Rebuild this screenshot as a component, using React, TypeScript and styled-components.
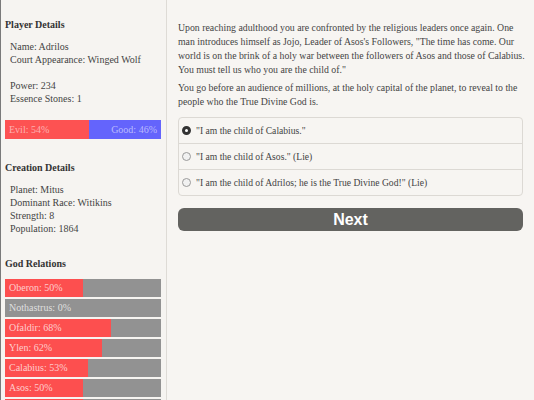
import { createGlobalStyle } from 'styled-components';
import styled from 'styled-components';

const GlobalStyle = createGlobalStyle`
  html, body {
    margin: 0;
    padding: 0;
    background: #f7f5f2;
  }
  body {
    font-family: 'Liberation Serif', 'Times New Roman', serif;
    color: #444;
    overflow: hidden;
  }
`;

interface Relation {
  name: string;
  value: number;
}

const relations: Relation[] = [
  { name: 'Oberon', value: 50 },
  { name: 'Nothastrus', value: 0 },
  { name: 'Ofaldir', value: 68 },
  { name: 'Ylen', value: 62 },
  { name: 'Calabius', value: 53 },
  { name: 'Asos', value: 50 },
  { name: 'Adrilos', value: 50 },
];

const choices = [
  { label: '"I am the child of Calabius."', checked: true },
  { label: '"I am the child of Asos." (Lie)', checked: false },
  { label: '"I am the child of Adrilos; he is the True Divine God!" (Lie)', checked: false },
];

export default function App() {
  return (
    <>
      <GlobalStyle />
      <Layout>
        <Sidebar>
          <SectionTitle>Player Details</SectionTitle>
          <InfoList>
            <span>Name: Adrilos</span>
            <span>Court Appearance: Winged Wolf</span>
          </InfoList>
          <InfoList $gap={13}>
            <span>Power: 234</span>
            <span>Essence Stones: 1</span>
          </InfoList>
          <AlignBar>
            <AlignPart $color='#fd5252' style={{ width: '54%' }}>
              Evil: 54%
            </AlignPart>
            <AlignPart $color='#6464fc' $right style={{ width: '46%' }}>
              Good: 46%
            </AlignPart>
          </AlignBar>

          <SectionTitle>Creation Details</SectionTitle>
          <InfoList>
            <span>Planet: Mitus</span>
            <span>Dominant Race: Witikins</span>
            <span>Strength: 8</span>
            <span>Population: 1864</span>
          </InfoList>

          <SectionTitle $top={22} $bottom={9}>
            God Relations
          </SectionTitle>
          <RelationList>
            {relations.map((r) => (
              <RelationBar key={r.name}>
                <RelationFill style={{ width: `${r.value}%` }} />
                <RelationLabel>
                  {r.name}: {r.value}%
                </RelationLabel>
              </RelationBar>
            ))}
          </RelationList>
        </Sidebar>

        <Main>
          <Paragraph>
            Upon reaching adulthood you are confronted by the religious leaders once again. One
            <br />
            man introduces himself as Jojo, Leader of Asos's Followers, "The time has come. Our
            <br />
            world is on the brink of a holy war between the followers of Asos and those of Calabius.
            <br />
            You must tell us who you are the child of."
          </Paragraph>
          <Paragraph>
            You go before an audience of millions, at the holy capital of the planet, to reveal to the
            <br />
            people who the True Divine God is.
          </Paragraph>

          <ChoiceBox>
            {choices.map((c) => (
              <ChoiceRow key={c.label}>
                <Radio $checked={c.checked} />
                <span>{c.label}</span>
              </ChoiceRow>
            ))}
          </ChoiceBox>

          <NextButton>Next</NextButton>
        </Main>
      </Layout>
    </>
  );
}

const Layout = styled.div`
  display: flex;
  align-items: stretch;
  min-height: 100vh;
`;

const Sidebar = styled.aside`
  width: 156px;
  flex-shrink: 0;
  padding: 18px 5px 0 4px;
  border-left: 1px solid #7a7a7a;
  border-right: 1px solid #dedbd6;
  background: #f6f4f1;
  display: flex;
  flex-direction: column;
  font-size: 10px;
  line-height: 13px;

  & > * {
    flex-shrink: 0;
  }
`;

const SectionTitle = styled.div<{ $top?: number; $bottom?: number }>`
  font-weight: bold;
  color: #333;
  font-size: 10px;
  line-height: 13px;
  margin-top: ${({ $top }) => $top ?? 0}px;
  margin-bottom: ${({ $bottom }) => $bottom ?? 9}px;
`;

const InfoList = styled.div<{ $gap?: number }>`
  display: flex;
  flex-direction: column;
  padding-left: 5px;
  margin-top: ${({ $gap }) => $gap ?? 0}px;
`;

const AlignBar = styled.div`
  display: flex;
  height: 19px;
  margin: 15px 0 22px;
`;

const AlignPart = styled.div<{ $color: string; $right?: boolean }>`
  background: ${({ $color }) => $color};
  color: rgba(255, 255, 255, 0.55);
  font-size: 10px;
  display: flex;
  align-items: center;
  justify-content: ${({ $right }) => ($right ? 'flex-end' : 'flex-start')};
  padding: 0 4px;
  box-sizing: border-box;
`;

const RelationList = styled.div`
  display: flex;
  flex-direction: column;
  gap: 2px;
`;

const RelationBar = styled.div`
  position: relative;
  height: 18px;
  flex-shrink: 0;
  background: #929292;
`;

const RelationFill = styled.div`
  height: 100%;
  background: #fd4f4f;
`;

const RelationLabel = styled.span`
  position: absolute;
  left: 4px;
  top: 0;
  line-height: 18px;
  font-size: 10px;
  color: rgba(255, 255, 255, 0.72);
`;

const Main = styled.main`
  flex: 1;
  min-width: 0;
  padding: 21px 11px 0 11px;
  display: flex;
  flex-direction: column;
`;

const Paragraph = styled.p`
  margin: 0 0 4px;
  font-size: 9.8px;
  line-height: 14px;
  white-space: nowrap;
  color: #444;
`;

const ChoiceBox = styled.div`
  margin-top: 4px;
  border: 1px solid #dcd9d4;
  border-radius: 4px;
  display: flex;
  flex-direction: column;
`;

const ChoiceRow = styled.div`
  height: 25px;
  display: flex;
  align-items: center;
  gap: 5px;
  padding-left: 3px;
  font-size: 9.6px;
  color: #444;

  & + & {
    border-top: 1px solid #dcd9d4;
  }
`;

const Radio = styled.span<{ $checked: boolean }>`
  width: 9px;
  height: 9px;
  flex-shrink: 0;
  border-radius: 50%;
  box-sizing: border-box;
  border: ${({ $checked }) => ($checked ? '3px solid #333' : '1px solid #9a9a9a')};
  background: ${({ $checked }) => ($checked ? '#fff' : '#f1f1f1')};
`;

const NextButton = styled.button`
  margin-top: 12px;
  height: 23px;
  border: none;
  border-radius: 6px;
  background: #636360;
  color: #fff;
  font-family: 'Liberation Sans', Arial, sans-serif;
  font-weight: bold;
  font-size: 16px;
  cursor: pointer;
`;
